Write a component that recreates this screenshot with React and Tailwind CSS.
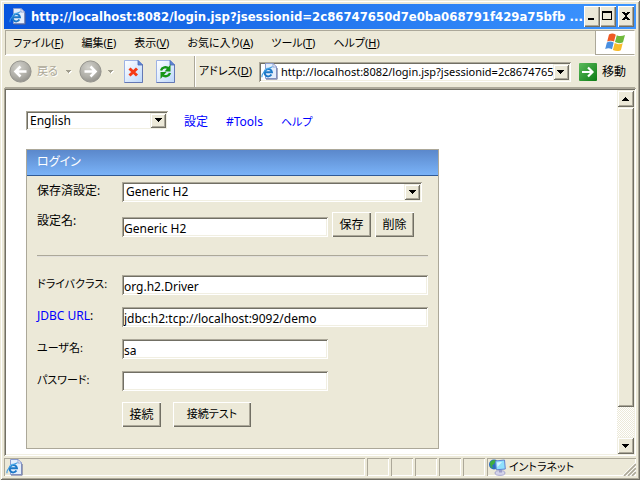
import React from "react";

const SUNKEN =
  "shadow-[inset_1px_1px_0_#aca899,inset_-1px_-1px_0_#ffffff,inset_2px_2px_0_#716f64,inset_-2px_-2px_0_#f1efe2]";
const RAISED =
  "shadow-[inset_1px_1px_0_#ffffff,inset_-1px_-1px_0_#716f64,inset_-2px_-2px_0_#aca899]";
const RAISED_SOFT =
  "shadow-[inset_1px_1px_0_#f1efe2,inset_-1px_-1px_0_#716f64,inset_2px_2px_0_#ffffff,inset_-2px_-2px_0_#aca899]";
const GROOVE = "shadow-[inset_1px_1px_0_#aca899,inset_-1px_-1px_0_#ffffff]";

function Arrow({ up = false }) {
  return (
    <svg width="7" height="4" viewBox="0 0 7 4" shapeRendering="crispEdges" aria-hidden="true">
      <path d={up ? "M3 0h1v1h1v1h1v1h1v1H0V3h1V2h1V1h1z" : "M0 0h7v1H6v1H5v1H4v1H3V3H2V2H1V1H0z"} />
    </svg>
  );
}

function SmallArrow() {
  return (
    <svg width="6" height="4" viewBox="0 0 6 4" shapeRendering="crispEdges" aria-hidden="true">
      <path d="M1 1h5v1H5v1H4v1H3V3H2V2H1z" fill="#ffffff" />
      <path d="M0 0h5v1H4v1H3v1H2V2H1V1H0z" fill="#a09d8e" />
    </svg>
  );
}

function IeIcon() {
  return (
    <svg width="17" height="17" viewBox="0 0 17 17" className="shrink-0" aria-hidden="true">
      <path d="M4.500 .5H12l3.500 3.500V15.500h-11z" fill="#e4eefc" stroke="#8b9ccf" />
      <path d="M12 .5V4h3.500z" fill="#ffffff" stroke="#7d90c8" strokeWidth=".8" />
      <path d="M5 16.200h11.200V5" fill="none" stroke="#5d648c" strokeWidth=".8" />
      <path d="M10.400 11.600A3.700 3.700 0 1 1 10.900 9.200H4" fill="none" stroke="#1b78c8" strokeWidth="2" />
      <path d="M3.600 7.500A4.200 4.200 0 0 1 8.500 5.200" fill="none" stroke="#63bdf2" strokeWidth="1" />
      <path d="M1.200 14.200C-.2 12 4 6 11.500 3.800" fill="none" stroke="#3c9be0" strokeWidth="1.100" />
    </svg>
  );
}

function WindowsLogo() {
  return (
    <svg width="21" height="19" viewBox="0 0 21 19" aria-hidden="true">
      <path d="M4 1.500C6.500 .2 8.500 .4 10.800 1.700L9 8.600C6.800 7.400 4.800 7.300 2.200 8.400z" fill="#ee5a24" />
      <path d="M11.800 2.200C14.500 3.500 17 3.400 20 2L18 9.200C15.200 10.500 12.800 10.400 10 9.100z" fill="#6fb93c" />
      <path d="M1.900 9.400C4.400 8.200 6.500 8.400 8.700 9.600L7 16.300C4.700 15.100 2.700 15 .2 16z" fill="#4a8fe0" />
      <path d="M9.700 10.100C12.400 11.400 14.800 11.500 17.700 10.200L15.900 17.200C13 18.500 10.700 18.300 7.900 16.900z" fill="#f8bc2c" />
    </svg>
  );
}

function NavCircle({ forward = false }) {
  return (
    <svg width="23" height="23" viewBox="0 0 23 23" className="shrink-0" aria-hidden="true">
      <defs>
        <radialGradient id={forward ? "fwd" : "back"} cx=".4" cy=".3" r=".75">
          <stop offset="0" stopColor="#d2d1cb" />
          <stop offset=".6" stopColor="#b0afa8" />
          <stop offset="1" stopColor="#8f8e88" />
        </radialGradient>
      </defs>
      <circle cx="11.500" cy="11.500" r="10.600" fill={forward ? "url(#fwd)" : "url(#back)"} stroke="#96958f" />
      <path
        d={forward ? "M5.500 11.500H16M11.500 6.500l5 5-5 5" : "M17.500 11.500H7M11.500 6.500l-5 5 5 5"}
        fill="none"
        stroke="#ffffff"
        strokeWidth="2.600"
      />
    </svg>
  );
}

function PageIcon({ children }) {
  return (
    <svg width="20" height="24" viewBox="0 0 20 24" aria-hidden="true">
      <defs>
        <linearGradient id="sheet" x1="0" y1="0" x2="1" y2="1">
          <stop offset="0" stopColor="#ffffff" />
          <stop offset="1" stopColor="#bcd8fb" />
        </linearGradient>
      </defs>
      <path d="M.5 .5h14l4 4v18H.5z" fill="url(#sheet)" stroke="#9db2e4" />
      <path d="M18.500 4.500v18H.5" fill="none" stroke="#6478b4" />
      <path d="M14 .5v4.500h4.500z" fill="#5d86d6" stroke="#4d69b4" strokeWidth=".8" />
      {children}
    </svg>
  );
}

function GoIcon() {
  return (
    <svg width="18" height="18" viewBox="0 0 18 18" aria-hidden="true">
      <defs>
        <linearGradient id="go" x1="0" y1="0" x2="1" y2="1">
          <stop offset="0" stopColor="#5cba5c" />
          <stop offset="1" stopColor="#0c7c14" />
        </linearGradient>
      </defs>
      <rect width="18" height="18" rx="1" fill="url(#go)" />
      <path d="M3 9h10M9 4.500L13.500 9 9 13.500" fill="none" stroke="#ffffff" strokeWidth="2.200" />
    </svg>
  );
}

function IntranetIcon() {
  return (
    <svg width="17" height="17" viewBox="0 0 17 17" className="shrink-0" aria-hidden="true">
      <circle cx="5" cy="5.500" r="5" fill="#2b6ec4" />
      <path d="M1 3.500C3 .5 6 .5 7 1.500L5 5 3 6.500 4 9.500 1.500 8z" fill="#3fae3f" />
      <path d="M6.500 2l9-1 .8 9-9 .8z" fill="#8fe0fc" stroke="#5f82d0" />
      <path d="M8 3.500l5-.6L8.500 8z" fill="#d8f6ff" />
      <ellipse cx="11" cy="14" rx="5" ry="2.400" fill="#d4d4ea" stroke="#9c9cc8" strokeWidth=".8" />
      <path d="M10 11h3v2.500h-3z" fill="#9c9cc8" />
    </svg>
  );
}

function CaptionButton({ label, children }) {
  return (
    <button type="button" aria-label={label} className={`flex h-[21px] w-4 items-center justify-center bg-[#ece9d8] ${RAISED}`}>
      <svg width="16" height="21" viewBox="0 0 16 21" shapeRendering="crispEdges" aria-hidden="true">
        {children}
      </svg>
    </button>
  );
}

const menus = [
  ["ファイル", "F"],
  ["編集", "E"],
  ["表示", "V"],
  ["お気に入り", "A"],
  ["ツール", "T"],
  ["ヘルプ", "H"],
];

function DropDown({ id, label, options, className }) {
  return (
    <div className={`relative ${className}`}>
      <select
        id={id}
        aria-label={label}
        className={`block h-full w-full appearance-none bg-white pr-5 pl-1 leading-5 ${SUNKEN}`}
      >
        {options.map((o) => (
          <option key={o}>{o}</option>
        ))}
      </select>
      <span
        className={`pointer-events-none absolute inset-y-0.5 right-0.5 flex w-4 items-center justify-center bg-[#ece9d8] ${RAISED_SOFT}`}
      >
        <Arrow />
      </span>
    </div>
  );
}

function Field({ id, label, type = "text", value = "", wide = false, link = false }) {
  return (
    <div className="flex h-5">
      <label htmlFor={id} className={`w-[85px] shrink-0 leading-[18px] ${link ? "text-[12px]" : "text-[11px]"}`}>
        {link ? (
          <a href="#jdbc-url" className="text-[#0000ff]">
            {label}
          </a>
        ) : (
          label
        )}
        :
      </label>
      <input
        id={id}
        type={type}
        defaultValue={value}
        className={`h-5 bg-white px-0.5 pt-0.5 ${wide ? "min-w-0 flex-1" : "w-[206px]"} ${SUNKEN}`}
      />
    </div>
  );
}

function PushButton({ children, wide = false }) {
  return (
    <button
      type="button"
      className={`h-[25px] bg-[#ece9d8] text-center ${wide ? "w-[78px] text-[11px]" : "w-[39px] text-[12px]"} ${RAISED}`}
    >
      {children}
    </button>
  );
}

function LoginPanel() {
  return (
    <form className="w-[413px] border border-[#aca899] bg-[#ece9d8]">
      <h2 className="h-[26px] border-b border-[#305a96] bg-linear-to-b from-[#5b88cb] to-[#7ab3f8] px-[10px] text-[12px] leading-6 text-white">
        ログイン
      </h2>
      <div className="px-[10px] pt-1.5 pb-[21px]">
        <div className="flex h-5">
          <label htmlFor="saved" className="w-[85px] shrink-0 leading-[18px]">
            保存済設定:
          </label>
          <DropDown id="saved" label="保存済設定" options={["Generic H2"]} className="w-[300px]" />
        </div>
        <div className="mt-[10px] flex h-[25px] items-end">
          <label htmlFor="name" className="w-[85px] shrink-0 self-start leading-[18px]">
            設定名:
          </label>
          <input id="name" type="text" defaultValue="Generic H2" className={`h-5 w-[206px] bg-white px-0.5 pt-0.5 ${SUNKEN}`} />
          <div className="ml-1 flex gap-1">
            <PushButton>保存</PushButton>
            <PushButton>削除</PushButton>
          </div>
        </div>
        <hr className="mt-[18px] mb-[18px] border-t border-b border-t-[#aca899] border-b-[#e2e0da]" />
        <div className="flex flex-col gap-3">
          <Field id="driver" label="ドライバクラス" value="org.h2.Driver" wide />
          <Field id="url" label="JDBC URL" value="jdbc:h2:tcp://localhost:9092/demo" wide link />
          <Field id="user" label="ユーザ名" value="sa" />
          <Field id="password" label="パスワード" type="password" />
        </div>
        <div className="mt-[11px] flex gap-3 pl-[85px]">
          <PushButton>接続</PushButton>
          <PushButton wide>接続テスト</PushButton>
        </div>
      </div>
    </form>
  );
}

export default function App() {
  return (
    <div
      className={`flex min-h-screen flex-col bg-[#ece9d8] p-1 font-['Noto_Sans','Noto_Sans_CJK_JP',sans-serif] text-[12px] text-black [font-feature-settings:'palt'] shadow-[inset_1px_1px_0_#ece9d8,inset_-1px_-1px_0_#716f64,inset_2px_2px_0_#ffffff,inset_-2px_-2px_0_#aca899]`}
    >
      <header className="flex h-[25px] items-center bg-linear-to-r from-[#0855dd] to-[#3d95ff] pr-0.5 pl-[5px]">
        <IeIcon />
        <h1 className="min-w-0 flex-1 overflow-hidden pl-[5px] font-['DejaVu_Sans_Condensed','DejaVu_Sans',sans-serif] text-[13px] font-bold whitespace-nowrap text-white">
          http://localhost:8082/login.jsp?jsessionid=2c86747650d7e0ba068791f429a75bfb ...
        </h1>
        <CaptionButton label="最小化">
          <path d="M4 12h6v2H4z" />
        </CaptionButton>
        <CaptionButton label="最大化">
          <path d="M2 5h10v9H2zM3 7v6h8V7z" fillRule="evenodd" />
        </CaptionButton>
        <div className="ml-0.5 flex">
          <CaptionButton label="閉じる">
            <path d="M4 6h3v1h2V6h3v1h-1v1h-1v1H9v2h1v1h1v1h1v1H9v-1H7v1H4v-1h1v-1h1v-1h1V9H6V8H5V7H4z" />
          </CaptionButton>
        </div>
      </header>

      <nav className={`mx-px mt-px flex h-[25px] items-center pl-2 ${GROOVE}`}>
        <div className="flex flex-1 gap-[18px] text-[11px]">
          {menus.map(([name, key]) => (
            <button key={key} type="button" className="leading-5 whitespace-nowrap">
              {name}(<u>{key}</u>)
            </button>
          ))}
        </div>
        <div className="flex h-[25px] w-10 items-center justify-center border border-t-[#aca899] border-r-white border-b-[#aca899] border-l-[#aca899] bg-white">
          <WindowsLogo />
        </div>
      </nav>

      <div className="mx-px flex h-[33px] items-center border-t border-b border-t-white border-b-[#aca899] pl-1">
        <button type="button" disabled className="flex items-center gap-[5px] text-[11px] text-[#aca899] [text-shadow:1px_1px_0_#ffffff]">
          <NavCircle />
          <span>戻る</span>
        </button>
        <button type="button" aria-label="戻る履歴" disabled className="ml-1.5 flex w-[11px] justify-center">
          <SmallArrow />
        </button>
        <button type="button" aria-label="進む" disabled className="ml-1">
          <NavCircle forward />
        </button>
        <button type="button" aria-label="進む履歴" disabled className="ml-1 flex w-[11px] justify-center">
          <SmallArrow />
        </button>
        <button type="button" aria-label="中止" className="ml-[7px]">
          <PageIcon>
            <path d="M5.500 8.500l7.500 7M13 8.500l-7.500 7" stroke="#f63a14" strokeWidth="3" fill="none" />
          </PageIcon>
        </button>
        <button type="button" aria-label="更新" className="ml-3">
          <PageIcon>
            <path d="M5 10.500C6 7 10.500 6.500 12.500 8.500" stroke="#169616" strokeWidth="2.400" fill="none" />
            <path d="M14.500 4.500v7H8.500z" fill="#169616" />
            <path d="M14 13C13 16.500 8.500 17 6.500 15" stroke="#169616" strokeWidth="2.400" fill="none" />
            <path d="M4.500 19v-7h6z" fill="#169616" />
          </PageIcon>
        </button>
        <form className="ml-[18px] flex h-full min-w-0 flex-1 items-center border-l border-[#aca899] pr-[9px] pl-1 shadow-[inset_1px_0_0_#ffffff]">
          <label htmlFor="address" className="shrink-0 text-[11px]">
            アドレス(<u>D</u>)
          </label>
          <div className={`ml-[7px] flex h-5 min-w-0 flex-1 items-center bg-white p-0.5 ${SUNKEN}`}>
            <IeIcon />
            <input
              id="address"
              type="text"
              defaultValue="http://localhost:8082/login.jsp?jsessionid=2c86747650d7e0ba068791f429a75bfb"
              className="min-w-0 flex-1 pl-[3px] text-[11px] leading-4"
            />
            <button
              type="button"
              aria-label="アドレス履歴"
              className={`flex h-4 w-4 items-center justify-center bg-[#ece9d8] ${RAISED_SOFT}`}
            >
              <Arrow />
            </button>
          </div>
          <button type="button" className="ml-2 flex shrink-0 items-center gap-[5px]">
            <GoIcon />
            <span>移動</span>
          </button>
        </form>
      </div>

      <div className={`flex flex-1 bg-white p-0.5 ${SUNKEN}`}>
        <main className="min-w-0 flex-1 px-5 pt-5">
          <div className="flex items-center">
            <DropDown id="language" label="言語" options={["English"]} className="h-[19px] w-[142px]" />
            <div className="flex gap-[18px] pt-1 pl-4 leading-4 text-[#0000ff]">
              <a href="#settings">設定</a>
              <a href="#tools">#Tools</a>
              <a href="#help" className="text-[11px]">
                ヘルプ
              </a>
            </div>
          </div>
          <div className="mt-[19px]">
            <LoginPanel />
          </div>
        </main>
        <div className="flex w-[17px] flex-col bg-[repeating-conic-gradient(#ece9d8_0_25%,#ffffff_0_50%)] bg-size-[2px_2px]">
          <button type="button" aria-label="上へ" className={`flex h-[17px] items-center justify-center bg-[#ece9d8] ${RAISED_SOFT}`}>
            <Arrow up />
          </button>
          <div className={`flex-10 bg-[#ece9d8] ${RAISED_SOFT}`} />
          <div className="flex-1" />
          <button type="button" aria-label="下へ" className={`flex h-[17px] items-center justify-center bg-[#ece9d8] ${RAISED_SOFT}`}>
            <Arrow />
          </button>
        </div>
      </div>

      <footer className="mt-0.5 flex h-[18px] gap-0.5">
        <div className={`flex flex-1 items-center pl-0.5 ${GROOVE}`}>
          <IeIcon />
        </div>
        <div className={`w-[22px] ${GROOVE}`} />
        <div className={`w-[22px] ${GROOVE}`} />
        <div className={`w-[22px] ${GROOVE}`} />
        <div className={`w-[22px] ${GROOVE}`} />
        <div className={`w-[22px] ${GROOVE}`} />
        <div className={`flex w-[149px] items-center gap-[3px] pl-0.5 text-[11px] ${GROOVE}`}>
          <IntranetIcon />
          <span className="flex-1 leading-4">イントラネット</span>
          <svg width="13" height="13" viewBox="0 0 13 13" className="self-end" aria-hidden="true">
            <path d="M1 13L13 1M5 13l8-8M9 13l4-4" stroke="#aca899" strokeWidth="1.600" />
            <path d="M0 12L12 0M4 12l8-8M8 12l4-4" stroke="#ffffff" strokeWidth=".8" />
          </svg>
        </div>
      </footer>
    </div>
  );
}
